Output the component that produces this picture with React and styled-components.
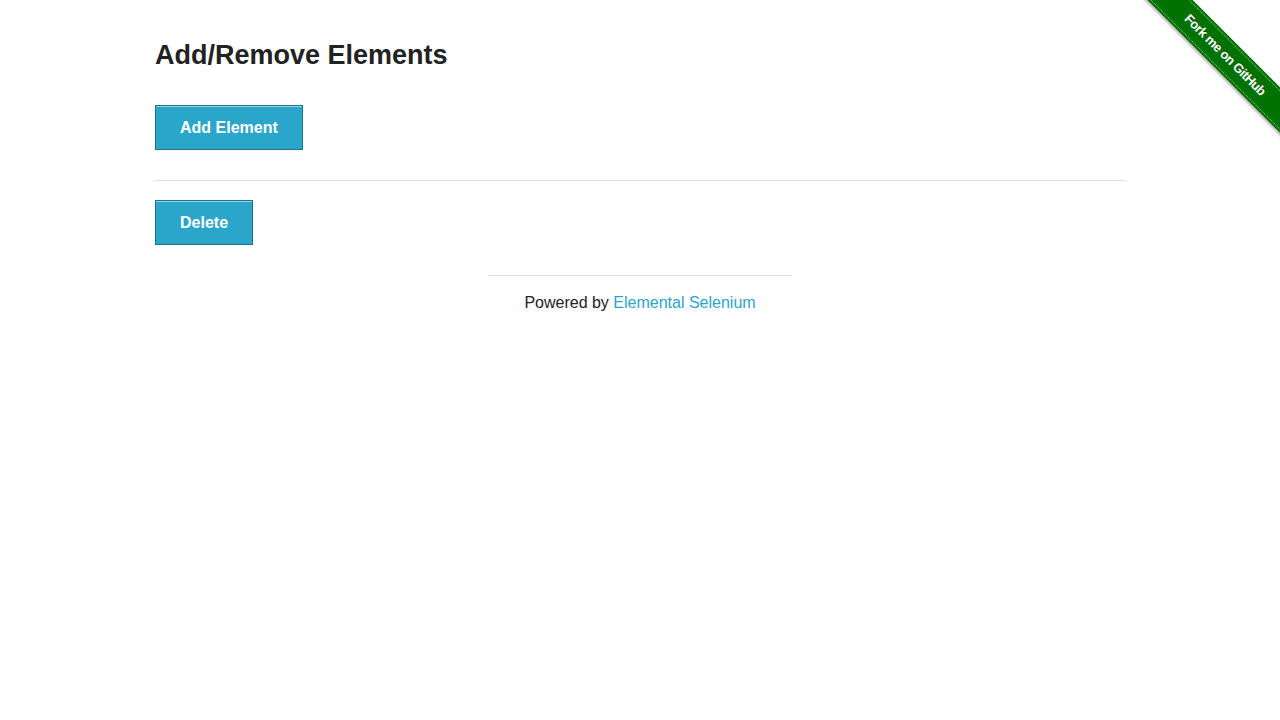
import styled, { createGlobalStyle } from 'styled-components';

const GlobalStyle = createGlobalStyle`
    body {
        margin: 0;
        background: #fff;
        color: #222;
        font-family: "Liberation Sans", Arial, sans-serif;
    }
`

function App() {
    return (
        <>
            <GlobalStyle />
            <Ribbon>
                <RibbonBand>Fork me on GitHub</RibbonBand>
            </Ribbon>
            <Container>
                <Title>Add/Remove Elements</Title>
                <Button type="button">Add Element</Button>
                <Divider />
                <Elements>
                    <Button type="button">Delete</Button>
                </Elements>
            </Container>
            <Footer>
                <FooterRule />
                <FooterText>
                    Powered by <a href="#selenium">Elemental Selenium</a>
                </FooterText>
            </Footer>
        </>
    )
}

export default App;

const Container = styled.div`
    width: 970px;
    margin: 0 auto;
`

const Title = styled.h3`
    margin: 38px 0 33px;
    font-size: 27px;
    line-height: 34px;
    font-weight: bold;
    color: #222;
`

const Button = styled.button`
    display: inline-block;
    height: 45px;
    padding: 0 24px;
    font-family: "Liberation Sans", Arial, sans-serif;
    font-size: 16px;
    font-weight: bold;
    color: #fff;
    background: #2ba6cb;
    border: 1px solid #1e728c;
    box-shadow: inset 0 1px 0 rgba(255, 255, 255, 0.5);
    cursor: pointer;
`

const Divider = styled.div`
    height: 1px;
    background: #ddd;
    margin: 30px 0 19px;
`

const Elements = styled.div`
    display: flex;
    gap: 8px;
`

const Footer = styled.div`
    display: flex;
    flex-direction: column;
    align-items: center;
    margin-top: 30px;
`

const FooterRule = styled.div`
    width: 304px;
    height: 1px;
    background: #ddd;
`

const FooterText = styled.p`
    margin: 17px 0 0;
    font-size: 16px;
    line-height: 20px;
    color: #222;

    a {
        color: #2ba6cb;
        text-decoration: none;
    }
`

const Ribbon = styled.div`
    position: absolute;
    top: 0;
    right: 0;
    width: 149px;
    height: 149px;
    overflow: hidden;
`

const RibbonBand = styled.div`
    position: absolute;
    left: -16px;
    top: 41px;
    width: 220px;
    height: 28px;
    box-sizing: border-box;
    transform: rotate(45deg);
    background: #007200;
    border-top: 1px dotted rgba(255, 255, 255, 0.55);
    border-bottom: 1px dotted rgba(255, 255, 255, 0.55);
    box-shadow: 0 0 0 2px #007200, 0 2px 3px 2px rgba(0, 0, 0, 0.3);
    color: #fff;
    font-family: "Liberation Sans", Arial, sans-serif;
    font-size: 13px;
    font-weight: bold;
    letter-spacing: -0.5px;
    line-height: 26px;
    text-align: center;
    text-shadow: 0 -1px 0 rgba(0, 0, 0, 0.4);
`
